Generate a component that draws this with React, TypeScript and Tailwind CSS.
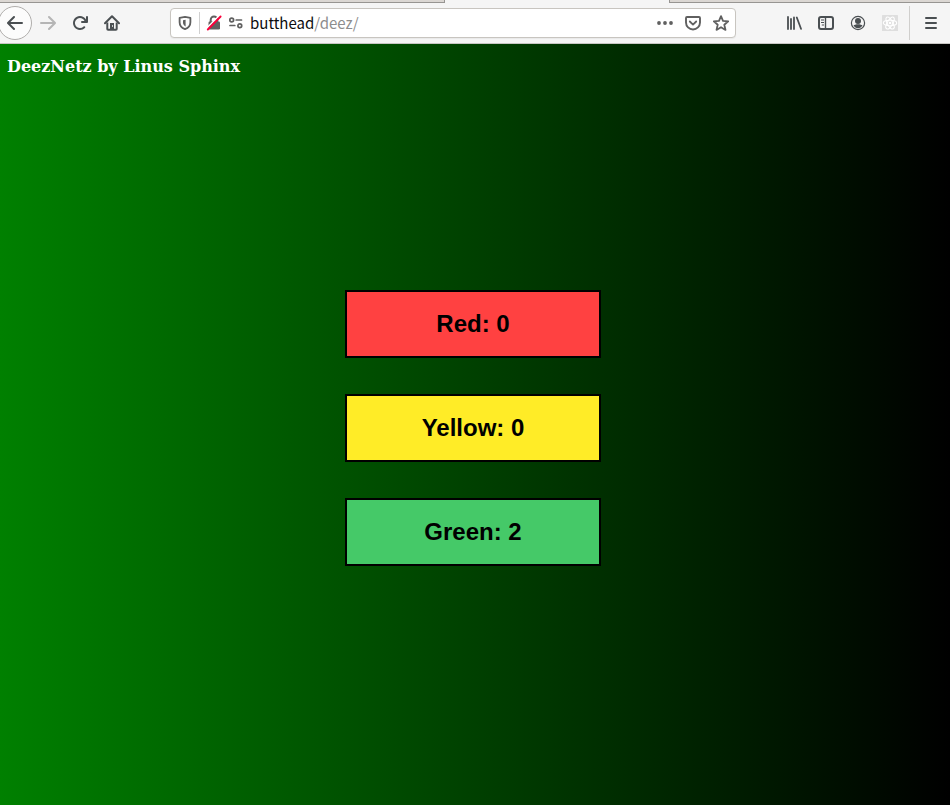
import type { ReactNode } from "react";

function Icon({ children }: { children: ReactNode }) {
  return (
    <svg viewBox="0 0 16 16" className="size-4 shrink-0" fill="currentColor" aria-hidden="true">
      {children}
    </svg>
  );
}

function ToolButton({ label, className = "text-[#4a4f52]", children }: { label: string; className?: string; children: ReactNode }) {
  return (
    <button type="button" aria-label={label} className={`flex size-8 shrink-0 items-center justify-center ${className}`}>
      <Icon>{children}</Icon>
    </button>
  );
}

const arrow =
  "M15 7H3.414l4.293-4.293a1 1 0 0 0-1.414-1.414l-6 6a1 1 0 0 0 0 1.414l6 6a1 1 0 0 0 1.414-1.414L3.414 9H15a1 1 0 0 0 0-2z";

function TabStrip() {
  return (
    <div className="flex h-[3px]">
      <div className="w-[445px] border-r border-b border-[#979592] bg-[#dbd7d3]" />
      <div className="w-56 bg-[#f5f5f5]" />
      <div className="flex-1 border-b border-l border-[#979592] bg-[#dbd7d3]" />
    </div>
  );
}

function AddressBar() {
  return (
    <div className="flex h-[30px] min-w-0 flex-1 items-center rounded-[4px] border border-[#c8c5c0] bg-white px-[6px] text-[#606060] shadow-[0_1px_1px_rgba(0,0,0,0.05)]">
      <button type="button" aria-label="Tracking protection">
        <Icon>
          <path d="M8 1.900 13.400 2.900v4.300c0 3.500-2.200 5.700-5.400 6.900-3.200-1.200-5.400-3.400-5.400-6.900V2.900z" fill="none" stroke="currentColor" strokeWidth="1.800" strokeLinejoin="round" />
          <path d="M8.600 4.700v6.800C6.900 10.500 6 9.200 6 7.200V5.200z" />
        </Icon>
      </button>
      <span className="mx-[6px] h-[22px] w-px bg-[#d0d0d0]" />
      <button type="button" aria-label="Connection is not secure">
        <Icon>
          <path d="M4.700 7V4.800a3.300 3.300 0 0 1 6.600 0V7" fill="none" stroke="currentColor" strokeWidth="2" />
          <rect x="2.500" y="6.500" width="11.500" height="8" rx="1.200" />
          <path d="M.5 13.500 13.500 .5" stroke="#fff" strokeWidth="1.600" />
          <path d="M1.800 14.500 14.600 1.500" stroke="#fb003b" strokeWidth="1.900" strokeLinecap="round" />
        </Icon>
      </button>
      <button type="button" aria-label="Permissions" className="ml-[6px]">
        <Icon>
          <g fill="none" stroke="currentColor" strokeWidth="1.700">
            <circle cx="3.700" cy="5" r="1.900" />
            <path d="M8.200 5H13.500M2 10.500h4.800" strokeLinecap="round" />
            <circle cx="11.800" cy="10.700" r="1.900" />
          </g>
        </Icon>
      </button>
      <a href="#deez" className="ml-[6px] font-['Noto_Sans_CJK_SC',sans-serif] text-[15px] leading-5 text-[#0c0c0d]">
        butthead<span className="text-[#8d8d8d]">/deez/</span>
      </a>
      <div className="ml-auto flex gap-3">
        <button type="button" aria-label="Page actions">
          <Icon>
            <circle cx="2" cy="8" r="1.900" />
            <circle cx="8" cy="8" r="1.900" />
            <circle cx="14" cy="8" r="1.900" />
          </Icon>
        </button>
        <button type="button" aria-label="Save to Pocket">
          <Icon>
            <path d="M2 2h12a1 1 0 0 1 1 1v4.500a7 7 0 0 1-14 0V3a1 1 0 0 1 1-1z" fill="none" stroke="currentColor" strokeWidth="1.900" />
            <path d="m4.800 6.500 3.200 3.100 3.200-3.100" fill="none" stroke="currentColor" strokeWidth="1.800" strokeLinecap="round" strokeLinejoin="round" />
          </Icon>
        </button>
        <button type="button" aria-label="Bookmark this page">
          <Icon>
            <path d="m8 1.200 2 4.600 5.200.5-3.900 3.400 1.200 5.200L8 12.200l-4.500 2.700 1.200-5.200L.8 6.300 6 5.800z" fill="none" stroke="currentColor" strokeWidth="1.800" strokeLinejoin="round" />
          </Icon>
        </button>
      </div>
    </div>
  );
}

function Toolbar() {
  return (
    <nav aria-label="Browser" className="flex h-[41px] items-center border-b border-[#c8c6c3] bg-[#f5f5f5] pr-[3px]">
      <button type="button" aria-label="Back" className="-ml-0.5 flex size-[34px] shrink-0 items-center justify-center rounded-full border border-[#b0aeac] bg-[#fcfcfc] text-[#4a4f52]">
        <Icon>
          <path d={arrow} />
        </Icon>
      </button>
      <ToolButton label="Forward" className="text-[#b5b5b5]">
        <path d={arrow} transform="rotate(180 8 8)" />
      </ToolButton>
      <ToolButton label="Reload">
        <path d="M15 1a1 1 0 0 0-1 1v2.418A6.995 6.995 0 1 0 8 15a6.954 6.954 0 0 0 4.950-2.050 1 1 0 0 0-1.414-1.414A5.019 5.019 0 1 1 12.549 6H10a1 1 0 0 0 0 2h5a1 1 0 0 0 1-1V2a1 1 0 0 0-1-1z" />
      </ToolButton>
      <ToolButton label="Home">
        <path d="M1 8.300 8 1.300l7 7" fill="none" stroke="currentColor" strokeWidth="2" strokeLinecap="round" strokeLinejoin="round" />
        <path d="M3.300 7.500V14a.8.8 0 0 0 .8.8h7.800a.8.8 0 0 0 .8-.8V7.500" fill="none" stroke="currentColor" strokeWidth="2" />
        <path fillRule="evenodd" d="M6 14.500V8h4v6.500zM8 10.300h1v1.500H8z" />
      </ToolButton>
      <div className="ml-[42px] flex min-w-0 flex-1">
        <AddressBar />
      </div>
      <div className="ml-[42px] flex">
        <ToolButton label="Library">
          <g fill="none" stroke="currentColor" strokeWidth="1.800" strokeLinecap="round">
            <path d="M2 2v12M5 4v10M8 2.500V14M10.800 2.500 15 13.800" />
          </g>
        </ToolButton>
        <ToolButton label="Sidebars">
          <rect x="1" y="2" width="14" height="12" rx="2" fill="none" stroke="currentColor" strokeWidth="2" />
          <path d="M7.500 2v12" stroke="currentColor" strokeWidth="1.400" />
          <path d="M3 5h3M3 7.500h3M3.800 10H6" stroke="currentColor" strokeWidth="1.100" />
        </ToolButton>
        <ToolButton label="Account">
          <circle cx="8" cy="8" r="6.600" fill="none" stroke="currentColor" strokeWidth="1.200" />
          <circle cx="8" cy="5.900" r="3" />
          <path d="M3.500 10.200c1.300-.2 2.100-.5 3-1h3c.9.500 1.700.8 3 1C11.600 12.200 10 13.200 8 13.200s-3.600-1-4.500-3z" />
        </ToolButton>
        <ToolButton label="React Developer Tools" className="text-[#dedede]">
          <rect width="16" height="16" rx="0.500" />
          <g fill="none" stroke="#fff" strokeWidth="1.100">
            <ellipse cx="8" cy="8" rx="6.700" ry="2.700" />
            <ellipse cx="8" cy="8" rx="6.700" ry="2.700" transform="rotate(60 8 8)" />
            <ellipse cx="8" cy="8" rx="6.700" ry="2.700" transform="rotate(120 8 8)" />
          </g>
          <circle cx="8" cy="8" r="1.300" fill="#fff" />
        </ToolButton>
      </div>
      <span className="mr-[5px] ml-[3px] h-[34px] w-px bg-[#d0cfcd]" />
      <ToolButton label="Menu">
        <path d="M3 3h10M3 8h10M3 13h10" stroke="currentColor" strokeWidth="2" strokeLinecap="round" />
      </ToolButton>
    </nav>
  );
}

const counters = [
  { name: "Red", count: 0, color: "bg-[#ff4141]" },
  { name: "Yellow", count: 0, color: "bg-[#ffec27]" },
  { name: "Green", count: 2, color: "bg-[#45c968]" },
];

export default function App() {
  return (
    <div className="flex min-h-screen flex-col overflow-x-hidden">
      <TabStrip />
      <Toolbar />
      <main className="flex flex-1 flex-col bg-linear-to-r/srgb from-[#008000] to-black">
        <h1 className="px-[7px] pt-3 font-['DejaVu_Serif',serif] text-base leading-[22px] font-bold text-white">
          DeezNetz by Linus Sphinx
        </h1>
        <div className="flex flex-1 flex-col items-center justify-center gap-9 pr-1 pb-7">
          {counters.map((c) => (
            <button
              key={c.name}
              type="button"
              className={`h-[68px] w-64 border-2 border-black font-['Liberation_Sans',Arial,sans-serif] text-2xl font-bold text-black ${c.color}`}
            >
              {c.name}: {c.count}
            </button>
          ))}
        </div>
      </main>
    </div>
  );
}
